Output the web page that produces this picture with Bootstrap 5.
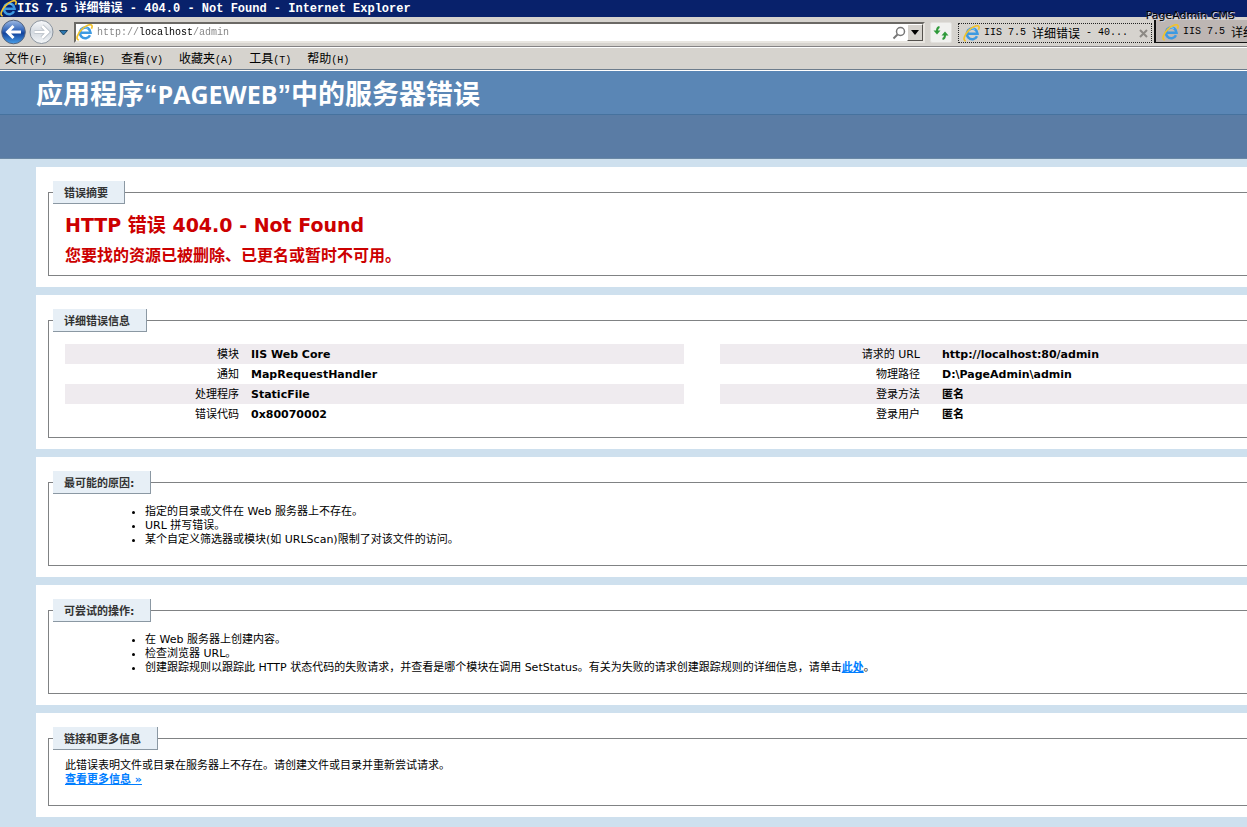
<!DOCTYPE html>
<html lang="zh-CN">
<head>
<meta charset="utf-8">
<meta name="viewport" content="width=device-width, initial-scale=1">
<title>IIS 7.5 详细错误 - 404.0 - Not Found</title>
<link href="https://cdn.jsdelivr.net/npm/bootstrap@5.3.0/dist/css/bootstrap.min.css" rel="stylesheet">
<style>
  body { background: #cee0ee; color: #000; font: 11px/14px "DejaVu Sans", "Noto Sans CJK SC", sans-serif; overflow-x: hidden; }
  button { font: inherit; color: inherit; }

  /* Browser window */
  .window-title { background: #08216b; color: #fff; height: 17px; font: bold 12px/19px "Liberation Mono", "Noto Sans CJK SC", monospace; white-space: pre; }
  .chrome-text { font: 12px/18px "Noto Sans CJK SC", sans-serif; white-space: pre; }
  .chrome-text span, .address input { font-family: "Liberation Mono", monospace; font-size: 10px; }
  .toolbar { background: #d6d3ce; height: 30px; padding: 1px 0 4px; border-bottom: 1px solid #848284; }
  .round-nav, .flat { background: none; border: 0; padding: 0; line-height: 0; }
  .address { height: 21px; margin: 4px 5px 0 6px; background: #fff; border: 2px solid; border-color: #6b6965 #e8e5e0 #e8e5e0 #6b6965; }
  .address input { border: 0; outline: 0; padding: 0; height: 17px;
    background: linear-gradient(90deg, #808080 42px, #000 42px, #000 96px, #808080 96px);
    -webkit-background-clip: text; background-clip: text; -webkit-text-fill-color: transparent; }
  .drop { width: 16px; height: 17px; padding: 0; line-height: 0; background: #d6d3ce; border: 1px solid; border-color: #fff #55524e #55524e #fff; }
  .refresh { width: 22px; height: 21px; margin: 4px 6px 0 0; padding: 0; line-height: 0; background: #f1f1ef; border: 1px solid #e2e0dc; border-radius: 2px; }
  .page-tab { border: 0; height: 20px; margin-top: 5px; background: #d6d3ce; }
  .page-tab.current { width: 194px; padding: 0 3px 0 4px; border: 1px dotted #222; }
  .page-tab.behind { width: 93px; height: 23px; margin: 2px 0 0 2px; padding: 2px 0 0 6px; background: #bdb6b3; border-left: 2px solid #111; border-bottom: 1px solid #111; }
  .menus { background: #d6d3ce; border-top: 1px solid #fff; border-bottom: 1px solid #6d7c8c; height: 23px; padding: 2px 5px 0; gap: 16px; }
  .menus button { background: none; border: 0; padding: 0; }
  .watermark { position: absolute; right: 12px; top: 9px; font: 11px/14px "DejaVu Sans", sans-serif; color: #000; text-shadow: 1px 1px 0 #d0d0d8, 0 1px 0 #aab; }

  /* Error page */
  .app-head { background: #5a86b5; border-top: 1px solid #fff; border-bottom: 1px solid #46729e; height: 45px; padding-left: 36px; }
  .app-head h1 { font: bold 27px/46px "Liberation Sans", "Noto Sans CJK SC", sans-serif; color: #fff; margin: 0; }
  .app-head h1 span { font-family: "Open Sans", sans-serif; font-weight: 700; font-size: 25px; }
  .app-strip { background: #5a7ca5; height: 44px; border-bottom: 1px solid #6a88a5; }
  .sheets { padding: 8px 0 9px 36px; gap: 8px; }
  .sheet { background: #fff; padding: 14px 0 11px 12px; }
  .sheet fieldset { border: 1px solid #808284; border-right: 0; padding: 0 0 0 16px; }
  .sheet legend { float: none; width: auto; margin: 0 0 0 -12px; padding: 3px 16px 0 11px; background: #e7eff6; border: 1px solid #8b98a3; border-top: 0; border-left: 0; color: #333; font: bold 11px/19px "DejaVu Sans", "Noto Sans CJK SC", sans-serif; }
  .sheet h2 { font: bold 19px/24px "DejaVu Sans", "Noto Sans CJK SC", sans-serif; margin: 9px 0 7px; color: #c00; }
  .sheet h3 { font: bold 16px/24px "DejaVu Sans", "Noto Sans CJK SC", sans-serif; margin: 0 0 7px; color: #c00; }
  .sheet a { color: #007eff; font-weight: bold; }
  .facts { display: grid; grid-template-columns: 619fr 527fr; gap: 36px; padding: 12px 0 13px; }
  .facts table { width: 100%; table-layout: fixed; }
  .facts tr:nth-child(odd) { background: #efebef; }
  .facts th, .facts td { height: 20px; padding: 1px 0 0; line-height: 19px; }
  .facts th { width: 186px; padding-right: 12px; text-align: right; font-weight: normal; }
  .facts table + table th { width: 222px; padding-right: 22px; }
  .facts td { font-weight: bold; }
  .sheet ul { margin: 0; padding: 11px 0 18px 80px; }
  .more { padding: 9px 0 18px; }
</style>
</head>
<body>
<svg width="0" height="0" class="position-absolute" aria-hidden="true">
  <symbol id="ie" viewBox="0 0 16 16">
    <path d="M13.2 10.6a5 5 0 1 1 .5-2.4H4" fill="none" stroke="#3d9ae2" stroke-width="2.4"/>
    <path d="M5 5.6a4.4 4.4 0 0 1 6-1.400" fill="none" stroke="#8fd0f8" stroke-width="1"/>
    <path d="M2.600 15C-.5 14.600 1.200 9.200 5.200 5.200 9 1.300 14 -.4 15 1.500c.4.8.1 1.900-.5 3" fill="none" stroke="#f0c22e" stroke-width="1.600"/>
  </symbol>
</svg>

<header class="position-relative overflow-hidden">
  <div class="window-title d-flex"><svg width="17" height="17" class="flex-shrink-0"><use href="#ie"/></svg><span>IIS 7.5 详细错误 - 404.0 - Not Found - Internet Explorer</span></div>

  <div class="toolbar d-flex align-items-start">
    <button class="round-nav" aria-label="后退"><svg width="27" height="27" viewBox="0 0 27 27">
      <defs><linearGradient id="blue" x2="0" y2="1"><stop stop-color="#9fbbe4"/><stop offset=".45" stop-color="#2e62b8"/><stop offset=".55" stop-color="#12439c"/><stop offset="1" stop-color="#4aa0ea"/></linearGradient>
      <linearGradient id="grey" x2="0" y2="1"><stop stop-color="#f8f9fb"/><stop offset=".5" stop-color="#d3d9e0"/><stop offset="1" stop-color="#f4f6f8"/></linearGradient></defs>
      <circle cx="13.500" cy="14" r="11.800" fill="url(#blue)" stroke="#55657f"/>
      <path d="M21 14H8M13.500 8 7.500 14l6 6" fill="none" stroke="#fff" stroke-width="3"/></svg></button>
    <button class="round-nav" aria-label="前进"><svg width="28" height="27" viewBox="0 0 28 27">
      <circle cx="14.500" cy="14" r="11.500" fill="url(#grey)" stroke="#8b949e"/>
      <path d="M7.500 14h13M15 8l6 6-6 6" fill="none" stroke="#aeb6bf" stroke-width="4"/>
      <path d="M7.500 14h13M15 8l6 6-6 6" fill="none" stroke="#fff" stroke-width="2.600"/></svg></button>
    <button class="flat ms-1 mt-2" aria-label="最近的页面"><svg width="9" height="12" viewBox="0 0 9 12"><path d="M.5 4.500h8L4.500 9Z" fill="#2d78b0" stroke="#1f4665"/></svg></button>
    <div class="address d-flex flex-grow-1">
      <svg width="17" height="17" class="flex-shrink-0 me-1"><use href="#ie"/></svg>
      <input class="flex-grow-1" type="text" aria-label="地址" value="http://localhost/admin">
      <button class="flat" aria-label="搜索"><svg width="16" height="16" viewBox="0 0 14 16"><circle cx="8.500" cy="6.500" r="4" fill="none" stroke="#777" stroke-width="1.500"/><path d="M5.500 9.500 1.500 13.500" stroke="#777" stroke-width="2"/></svg></button>
      <button class="drop" aria-label="显示地址栏"><svg width="8" height="5"><path d="M0 0h8L4 5Z"/></svg></button>
    </div>
    <button class="refresh" aria-label="刷新"><svg width="16" height="14" viewBox="0 0 16 14"><path d="M6.500 1C4.500 1.300 4 2.500 4 5M9.500 13c2-.3 2.500-1.500 2.500-4" fill="none" stroke="#2f9a3a" stroke-width="2"/><path d="M.5 4.500h7L4 8.500ZM8.500 9.500h7L12 5.500Z" fill="#2f9a3a"/></svg></button>
    <button class="page-tab current chrome-text d-flex align-items-center"><svg width="17" height="17" class="flex-shrink-0 me-1"><use href="#ie"/></svg><span>IIS 7.5 </span>详细错误<span> - 40...</span><svg width="9" height="9" class="ms-auto" viewBox="0 0 9 9"><path d="m1 1 7 7M8 1 1 8" stroke="#8c8984" stroke-width="2"/></svg></button>
    <button class="page-tab behind chrome-text d-flex align-items-center overflow-hidden"><svg width="17" height="17" class="flex-shrink-0 me-1"><use href="#ie"/></svg><span>IIS 7.5 </span>详细</button>
  </div>

  <nav class="menus chrome-text d-flex align-items-center" aria-label="菜单">
    <button>文件<span>(F)</span></button><button>编辑<span>(E)</span></button><button>查看<span>(V)</span></button><button>收藏夹<span>(A)</span></button><button>工具<span>(T)</span></button><button>帮助<span>(H)</span></button>
  </nav>
  <div class="watermark">PageAdmin CMS</div>
</header>

<div class="app-head"><h1>应用程序“<span>PAGEWEB</span>”中的服务器错误</h1></div>
<div class="app-strip"></div>

<main class="sheets d-flex flex-column">
  <section class="sheet"><fieldset>
    <legend>错误摘要</legend>
    <h2>HTTP 错误 404.0 - Not Found</h2>
    <h3>您要找的资源已被删除、已更名或暂时不可用。</h3>
  </fieldset></section>

  <section class="sheet"><fieldset>
    <legend>详细错误信息</legend>
    <div class="facts">
      <table>
        <tr><th scope="row">模块</th><td>IIS Web Core</td></tr>
        <tr><th scope="row">通知</th><td>MapRequestHandler</td></tr>
        <tr><th scope="row">处理程序</th><td>StaticFile</td></tr>
        <tr><th scope="row">错误代码</th><td>0x80070002</td></tr>
      </table>
      <table>
        <tr><th scope="row">请求的 URL</th><td>http://localhost:80/admin</td></tr>
        <tr><th scope="row">物理路径</th><td>D:\PageAdmin\admin</td></tr>
        <tr><th scope="row">登录方法</th><td>匿名</td></tr>
        <tr><th scope="row">登录用户</th><td>匿名</td></tr>
      </table>
    </div>
  </fieldset></section>

  <section class="sheet"><fieldset>
    <legend>最可能的原因:</legend>
    <ul>
      <li>指定的目录或文件在 Web 服务器上不存在。</li>
      <li>URL 拼写错误。</li>
      <li>某个自定义筛选器或模块(如 URLScan)限制了对该文件的访问。</li>
    </ul>
  </fieldset></section>

  <section class="sheet"><fieldset>
    <legend>可尝试的操作:</legend>
    <ul>
      <li>在 Web 服务器上创建内容。</li>
      <li>检查浏览器 URL。</li>
      <li>创建跟踪规则以跟踪此 HTTP 状态代码的失败请求，并查看是哪个模块在调用 SetStatus。有关为失败的请求创建跟踪规则的详细信息，请单击<a href="#">此处</a>。</li>
    </ul>
  </fieldset></section>

  <section class="sheet"><fieldset>
    <legend>链接和更多信息</legend>
    <div class="more">此错误表明文件或目录在服务器上不存在。请创建文件或目录并重新尝试请求。<br><a href="#">查看更多信息 »</a></div>
  </fieldset></section>
</main>
<script src="https://cdn.jsdelivr.net/npm/bootstrap@5.3.0/dist/js/bootstrap.bundle.min.js"></script>
</body>
</html>
